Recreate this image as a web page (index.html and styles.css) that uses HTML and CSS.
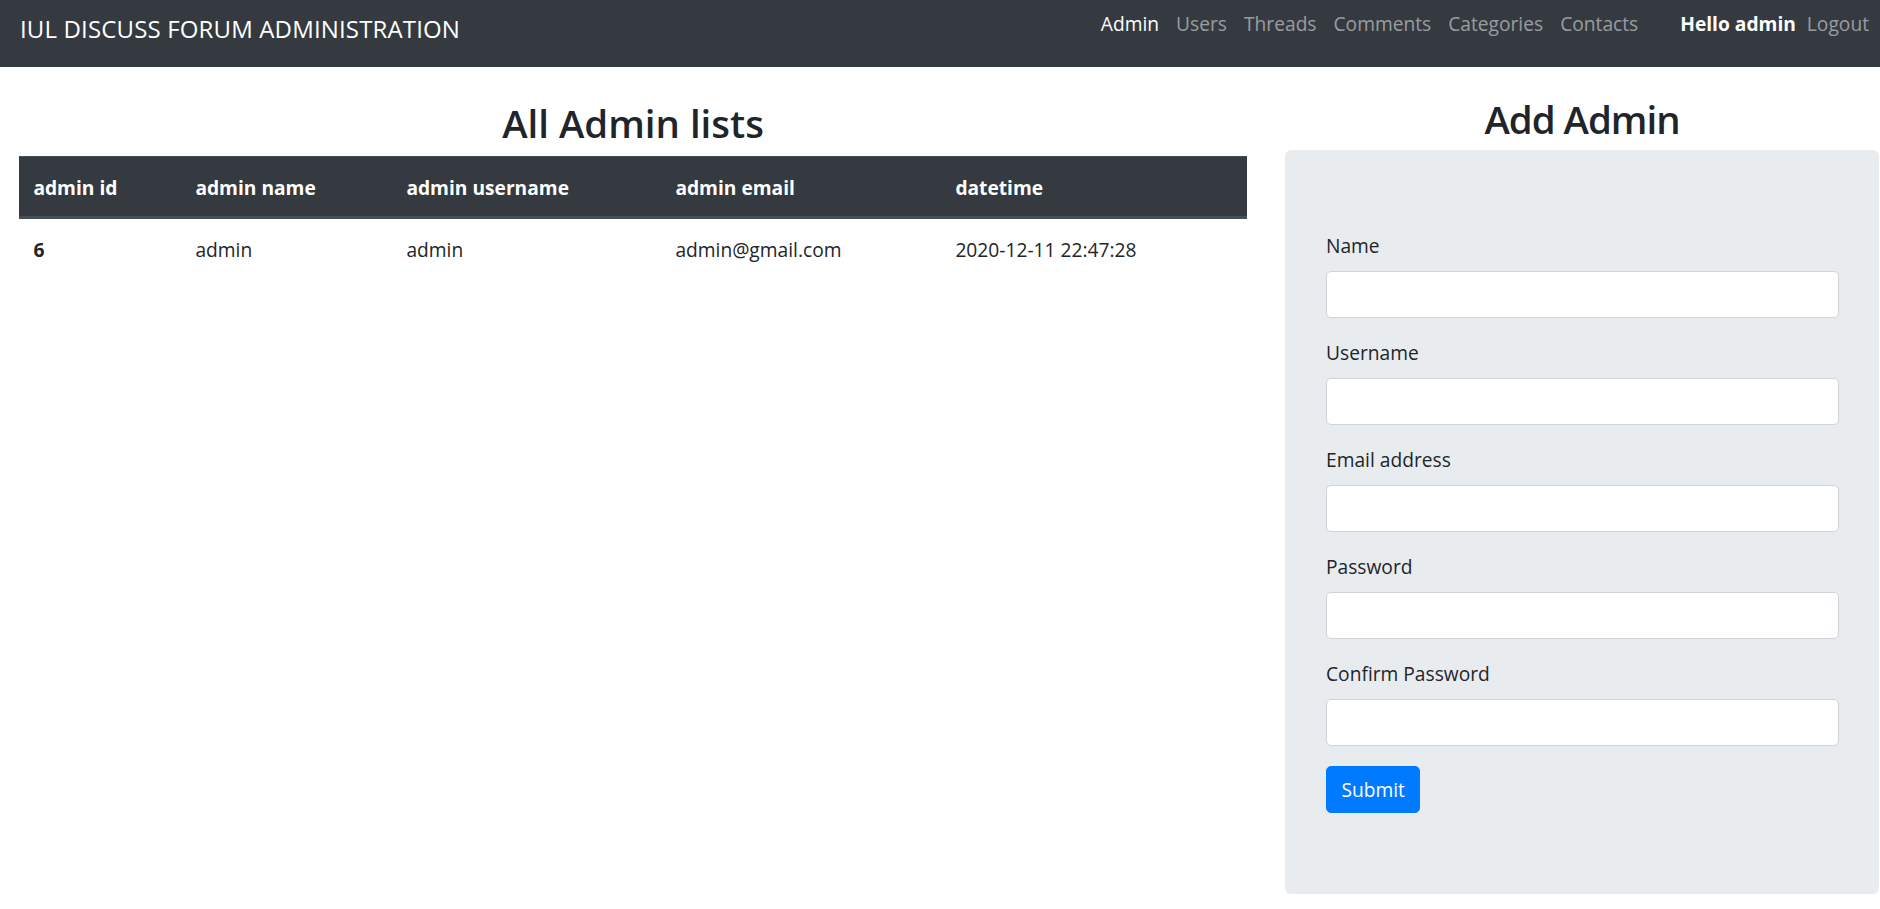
FILE: index.html
```html
<!DOCTYPE html>
<html lang="en">
<head>
<meta charset="utf-8">
<title>IUL Discuss Forum Administration</title>
<link rel="stylesheet" href="styles.css">
</head>
<body>
<nav class="navbar">
  <a class="brand" href="#">IUL DISCUSS FORUM ADMINISTRATION</a>
  <div class="nav-right">
    <ul class="nav-links">
      <li><a class="active" href="#">Admin</a></li>
      <li><a href="#">Users</a></li>
      <li><a href="#">Threads</a></li>
      <li><a href="#">Comments</a></li>
      <li><a href="#">Categories</a></li>
      <li><a href="#">Contacts</a></li>
    </ul>
    <div class="user">
      <span class="hello">Hello admin</span>
      <a class="logout" href="#">Logout</a>
    </div>
  </div>
</nav>

<main class="main">
  <section class="list-col">
    <h2 class="title title-list">All Admin lists</h2>
    <table class="table">
      <thead>
        <tr>
          <th class="c1">admin id</th>
          <th class="c2">admin name</th>
          <th class="c3">admin username</th>
          <th class="c4">admin email</th>
          <th class="c5">datetime</th>
        </tr>
      </thead>
      <tbody>
        <tr>
          <th>6</th>
          <td>admin</td>
          <td>admin</td>
          <td>admin@gmail.com</td>
          <td>2020-12-11 22:47:28</td>
        </tr>
      </tbody>
    </table>
  </section>

  <section class="form-col">
    <h2 class="title title-form">Add Admin</h2>
    <div class="jumbotron">
      <form class="form">
        <div class="form-group">
          <label for="name">Name</label>
          <input class="form-control" id="name" type="text">
        </div>
        <div class="form-group">
          <label for="username">Username</label>
          <input class="form-control" id="username" type="text">
        </div>
        <div class="form-group">
          <label for="email">Email address</label>
          <input class="form-control" id="email" type="email">
        </div>
        <div class="form-group">
          <label for="password">Password</label>
          <input class="form-control" id="password" type="password">
        </div>
        <div class="form-group">
          <label for="cpassword">Confirm Password</label>
          <input class="form-control" id="cpassword" type="password">
        </div>
        <button class="btn" type="submit">Submit</button>
      </form>
    </div>
  </section>
</main>
</body>
</html>
```

FILE: styles.css
```css
* {
  box-sizing: border-box;
}

html, body {
  margin: 0;
  padding: 0;
  background: #ffffff;
}

body {
  font-family: "Open Sans", "Noto Sans", "Liberation Sans", sans-serif;
  font-size: 19.2px;
  line-height: 29px;
  color: #212529;
}

a {
  text-decoration: none;
}

/* ---------- navbar ---------- */
.navbar {
  height: 67px;
  background: #343a40;
  display: flex;
  justify-content: space-between;
  align-items: flex-start;
  padding: 0 11px 0 20px;
}

.brand {
  margin-top: 11px;
  font-size: 24px;
  line-height: 36px;
  letter-spacing: 0.15px;
  color: #ffffff;
  white-space: nowrap;
}

.nav-right {
  display: flex;
  align-items: flex-start;
  margin-top: 9px;
  gap: 42px;
}

.nav-links {
  list-style: none;
  margin: 0;
  padding: 0;
  display: flex;
  gap: 17px;
}

.nav-links a {
  display: block;
  color: rgba(255, 255, 255, 0.5);
  line-height: 29px;
}

.nav-links a.active {
  color: #ffffff;
}

.user {
  display: flex;
  gap: 11px;
}

.hello {
  color: #ffffff;
  font-weight: 700;
}

.logout {
  color: rgba(255, 255, 255, 0.5);
}

/* ---------- main ---------- */
.main {
  display: flex;
  align-items: flex-start;
  padding: 0 1px 0 19px;
  gap: 38px;
}

.list-col {
  width: 1228px;
  flex: none;
  padding-top: 33px;
}

.form-col {
  flex: 1;
  padding-top: 29px;
}

.title {
  margin: 0;
  font-size: 38.4px;
  line-height: 46px;
  font-weight: 600;
  text-align: center;
  color: #212529;
}

.title-list {
  margin-bottom: 10px;
}

.title-form {
  margin-bottom: 8px;
  letter-spacing: -1px;
}

/* ---------- table ---------- */
.table {
  width: 100%;
  border-collapse: collapse;
  table-layout: fixed;
}

.table th,
.table td {
  text-align: left;
  padding: 16px 14.4px 14px;
  line-height: 29px;
  vertical-align: top;
  white-space: nowrap;
}

.table thead th {
  background: #343a40;
  color: #ffffff;
  font-weight: 700;
  border-top: 1px solid #454d55;
  border-bottom: 3px solid #454d55;
}

.table tbody th {
  font-weight: 700;
}

.c1 { width: 162px; }
.c2 { width: 211px; }
.c3 { width: 269px; }
.c4 { width: 280px; }
.c5 { width: 306px; }

/* ---------- form ---------- */
.jumbotron {
  background: #e9ecef;
  border-radius: 6px;
  padding: 81px 40px 81px 41px;
}

.form-group {
  margin-bottom: 20px;
}

.form-group label {
  display: block;
  line-height: 29px;
  margin-bottom: 11px;
}

.form-control {
  display: block;
  width: 100%;
  height: 47px;
  background: #ffffff;
  border: 1px solid #ced4da;
  border-radius: 5px;
  padding: 7px 14px;
  font: inherit;
  color: #495057;
}

.btn {
  display: block;
  height: 47px;
  padding: 0 14.4px;
  background: #007bff;
  border: 1px solid #007bff;
  border-radius: 5px;
  color: #ffffff;
  font: inherit;
  line-height: 29px;
  cursor: pointer;
}
```
